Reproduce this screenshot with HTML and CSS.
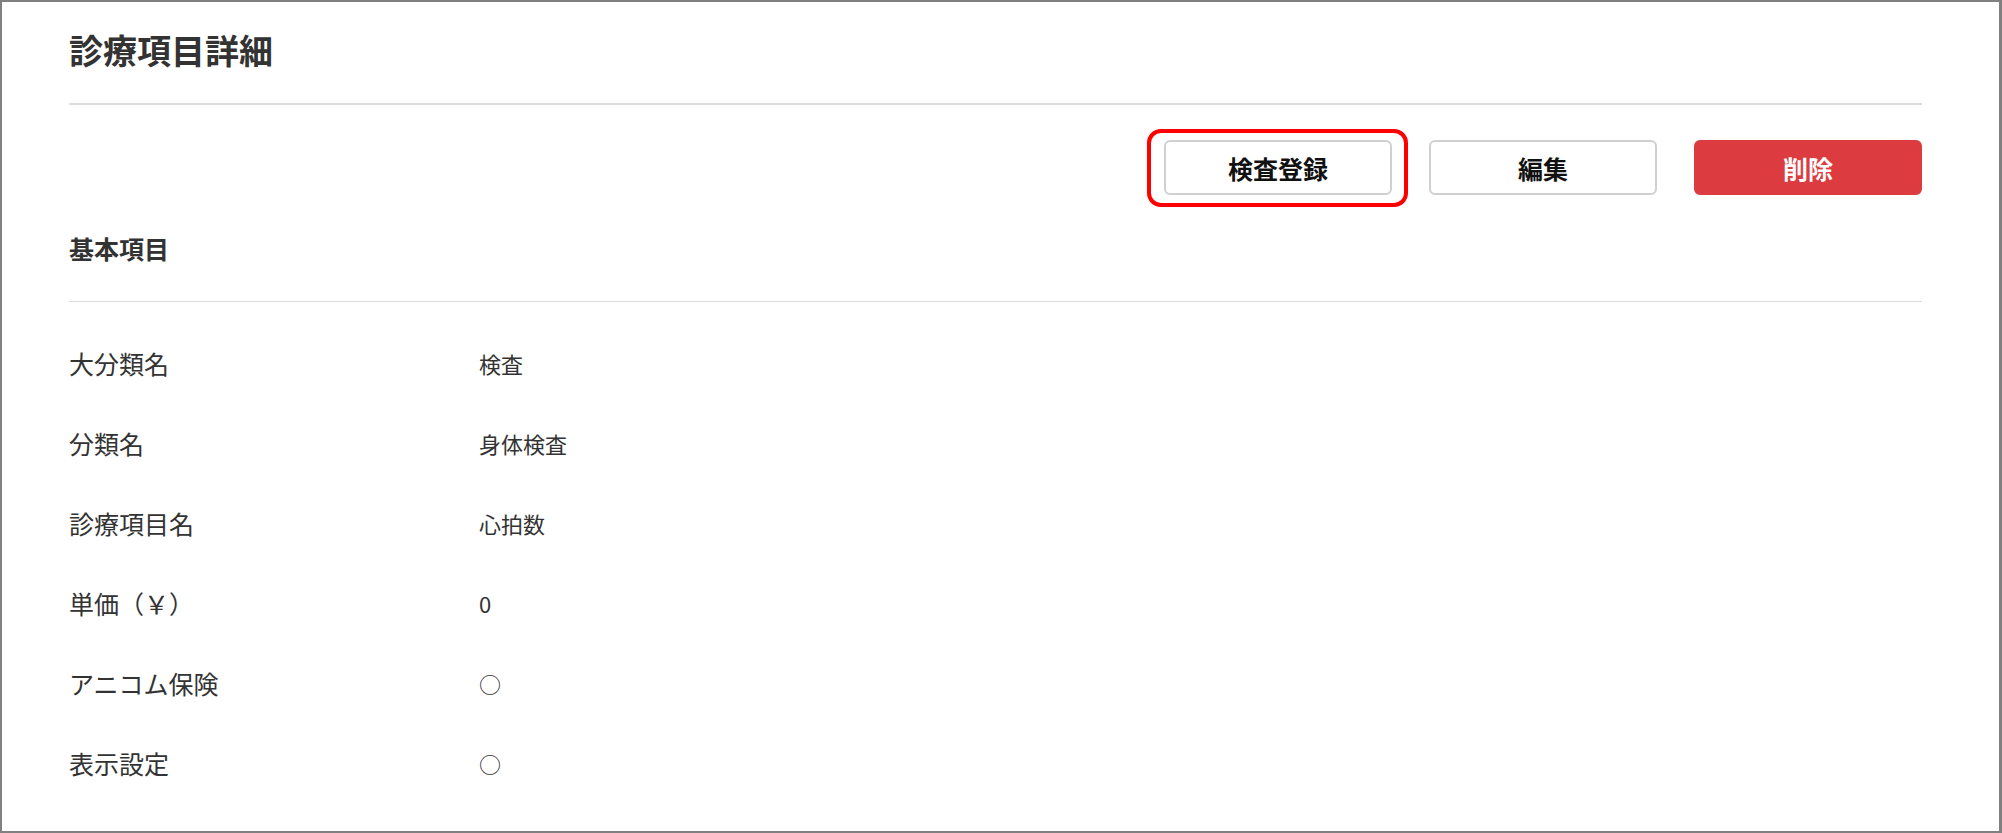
FILE: index.html
```html
<!DOCTYPE html>
<html lang="ja">
<head>
  <meta charset="UTF-8">
  <title>診療項目詳細</title>
  <link rel="stylesheet" href="styles.css">
</head>
<body>

<div class="pantalla">
  <div class="cabecera">
    <h1>診療項目詳細</h1>
  </div>

  <div class="acciones">
    <span class="marcado"><button class="btn">検査登録</button></span>
    <button class="btn">編集</button>
    <button class="btn borrar">削除</button>
  </div>

  <h2 class="subtitulo">基本項目</h2>

  <dl class="detalle">
    <dt>大分類名</dt><dd>検査</dd>
    <dt>分類名</dt><dd>身体検査</dd>
    <dt>診療項目名</dt><dd>心拍数</dd>
    <dt>単価（￥）</dt><dd>0</dd>
    <dt>アニコム保険</dt><dd>○</dd>
    <dt>表示設定</dt><dd>○</dd>
  </dl>
</div>

</body>
</html>
```

FILE: styles.css
```css
* {
  box-sizing: border-box;
}
body {
  margin: 0;
  font-family: "Noto Sans CJK JP", "Noto Sans", sans-serif;
  color: #333;
  background: white;
}
.pantalla {
  height: 833px;
  border: 2px solid #808080;
  border-right-width: 3px;
  padding: 0 77px 0 67px;
  overflow: hidden;
}
.cabecera {
  padding: 22px 0 28px;
  border-bottom: 2px solid #dcdcdc;
}
h1 {
  margin: 0;
  font-size: 34px;
  line-height: 51px;
  font-weight: bold;
  color: #333;
}
.acciones {
  display: flex;
  justify-content: flex-end;
  gap: 37px;
  margin-top: 35px;
}
.btn {
  width: 228px;
  height: 55px;
  border: 2px solid #d0d0d0;
  border-radius: 6px;
  background: white;
  color: #111;
  font-family: inherit;
  font-size: 25px;
  font-weight: bold;
  cursor: pointer;
}
.borrar {
  border-color: #dc3c40;
  background-color: #dc3c40;
  color: white;
}
.marcado {
  position: relative;
  display: block;
}
.marcado::after {
  content: "";
  position: absolute;
  top: -11px;
  bottom: -12px;
  left: -17px;
  right: -16px;
  border: 4px solid #f00;
  border-radius: 14px;
  pointer-events: none;
}
.subtitulo {
  margin: 33px 0 0;
  padding-bottom: 33px;
  font-size: 25px;
  line-height: 40px;
  font-weight: bold;
  border-bottom: 1px solid #dcdcdc;
}
.detalle {
  display: grid;
  grid-template-columns: 410px 1fr;
  grid-auto-rows: 80px;
  align-items: center;
  margin: 21px 0 0;
}
.detalle dt {
  font-size: 25px;
}
.detalle dd {
  margin: 0;
  font-size: 22px;
}
```
